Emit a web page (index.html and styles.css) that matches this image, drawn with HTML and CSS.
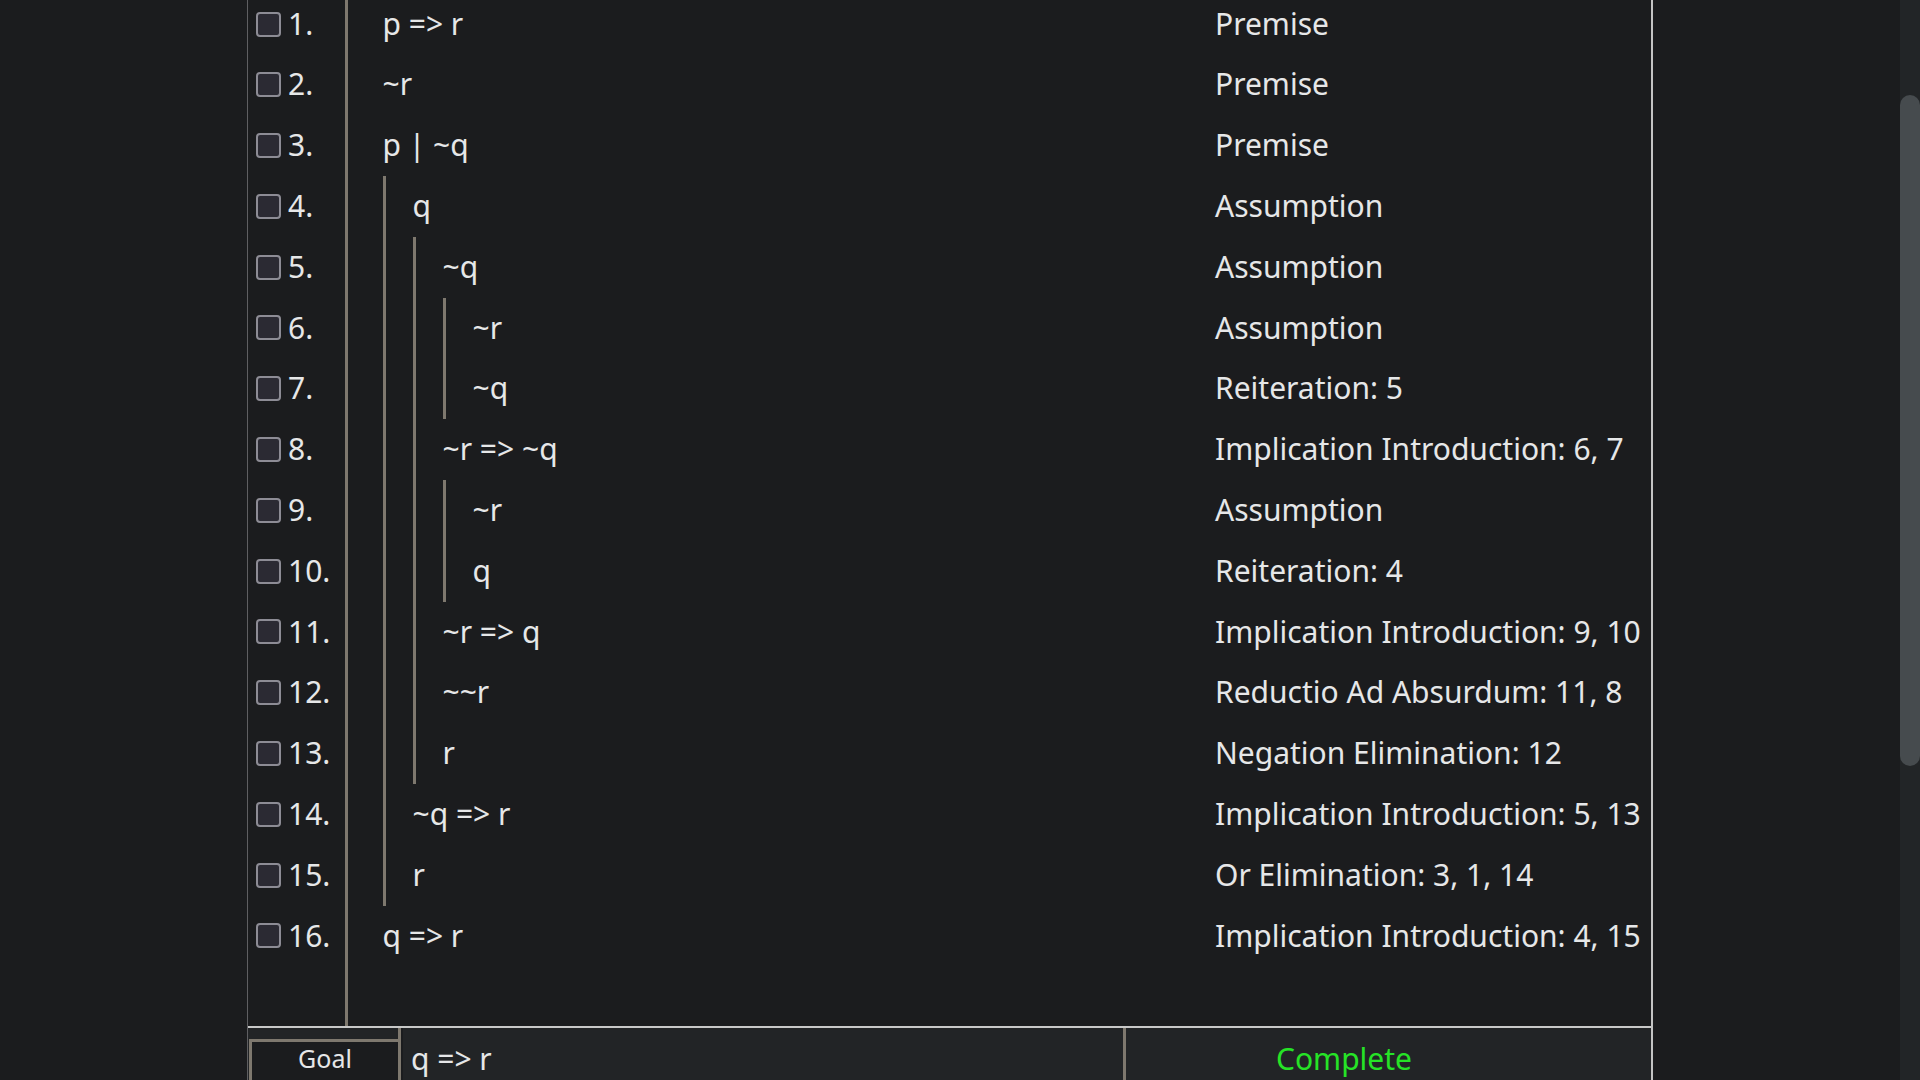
FILE: index.html
```html
<!DOCTYPE html>
<html>
<head>
<meta charset="utf-8">
<link rel="stylesheet" href="styles.css">
</head>
<body>
<div class="app">
  <div class="panel">
    <div class="proof-area">
      <div class="col-num">
        <div class="list">
          <div class="row"><span class="cb"></span><span class="n">1.</span></div>
          <div class="row"><span class="cb"></span><span class="n">2.</span></div>
          <div class="row"><span class="cb"></span><span class="n">3.</span></div>
          <div class="row"><span class="cb"></span><span class="n">4.</span></div>
          <div class="row"><span class="cb"></span><span class="n">5.</span></div>
          <div class="row"><span class="cb"></span><span class="n">6.</span></div>
          <div class="row"><span class="cb"></span><span class="n">7.</span></div>
          <div class="row"><span class="cb"></span><span class="n">8.</span></div>
          <div class="row"><span class="cb"></span><span class="n">9.</span></div>
          <div class="row"><span class="cb"></span><span class="n">10.</span></div>
          <div class="row"><span class="cb"></span><span class="n">11.</span></div>
          <div class="row"><span class="cb"></span><span class="n">12.</span></div>
          <div class="row"><span class="cb"></span><span class="n">13.</span></div>
          <div class="row"><span class="cb"></span><span class="n">14.</span></div>
          <div class="row"><span class="cb"></span><span class="n">15.</span></div>
          <div class="row"><span class="cb"></span><span class="n">16.</span></div>
        </div>
      </div>
      <div class="col-formula">
        <div class="list">
          <div class="row">p =&gt; r</div>
          <div class="row">~r</div>
          <div class="row">p | ~q</div>
          <div class="sub">
            <div class="row">q</div>
            <div class="sub">
              <div class="row">~q</div>
              <div class="sub">
                <div class="row">~r</div>
                <div class="row">~q</div>
              </div>
              <div class="row">~r =&gt; ~q</div>
              <div class="sub">
                <div class="row">~r</div>
                <div class="row">q</div>
              </div>
              <div class="row">~r =&gt; q</div>
              <div class="row">~~r</div>
              <div class="row">r</div>
            </div>
            <div class="row">~q =&gt; r</div>
            <div class="row">r</div>
          </div>
          <div class="row">q =&gt; r</div>
        </div>
      </div>
      <div class="col-reason">
        <div class="list">
          <div class="row">Premise</div>
          <div class="row">Premise</div>
          <div class="row">Premise</div>
          <div class="row">Assumption</div>
          <div class="row">Assumption</div>
          <div class="row">Assumption</div>
          <div class="row">Reiteration: 5</div>
          <div class="row">Implication Introduction: 6, 7</div>
          <div class="row">Assumption</div>
          <div class="row">Reiteration: 4</div>
          <div class="row">Implication Introduction: 9, 10</div>
          <div class="row">Reductio Ad Absurdum: 11, 8</div>
          <div class="row">Negation Elimination: 12</div>
          <div class="row">Implication Introduction: 5, 13</div>
          <div class="row">Or Elimination: 3, 1, 14</div>
          <div class="row">Implication Introduction: 4, 15</div>
        </div>
      </div>
    </div>
    <div class="bottom">
      <div class="goal-cell"><div class="goal-btn">Goal</div></div>
      <div class="goal-formula">q =&gt; r</div>
      <div class="status">Complete</div>
    </div>
  </div>
  <div class="spacer"></div>
  <div class="scrollbar"><div class="thumb"></div></div>
</div>
</body>
</html>
```

FILE: styles.css
```css
html, body {
  margin: 0;
  padding: 0;
  background: #1b1c1e;
  overflow: hidden;
}

body {
  font-family: "Noto Sans", "Open Sans", sans-serif;
  font-size: 30px;
  color: #e6e7e8;
}

.app {
  display: flex;
  width: 1920px;
  height: 1080px;
  overflow: hidden;
}

.panel {
  margin-left: 247px;
  width: 1403px;
  border-left: 1px solid #5f5f62;
  border-right: 2px solid #c4c4c4;
  display: flex;
  flex-direction: column;
  flex: none;
}

.proof-area {
  display: flex;
  height: 1026px;
  overflow: hidden;
  flex: none;
}

.list {
  margin-top: -6.4px;
}

.row {
  height: 60.8px;
  line-height: 59.8px;
  padding-bottom: 1px;
  box-sizing: border-box;
  white-space: nowrap;
}

.col-num {
  width: 97px;
  flex: none;
  border-right: 3px solid #7e786e;
}

.col-num .row {
  display: flex;
  align-items: center;
  padding-left: 8px;
  padding-bottom: 0;
}

.col-num .n {
  margin-left: 7px;
  line-height: 59.8px;
  padding-bottom: 1px;
}

.cb {
  width: 25px;
  height: 25px;
  box-sizing: border-box;
  border: 2.5px solid #8d8c95;
  border-radius: 4px;
  background: #2b2a33;
  flex: none;
}

.col-formula {
  flex: 1;
  padding-left: 34.5px;
}

.sub {
  border-left: 3px solid #7e786e;
  padding-left: 27px;
}

.col-reason {
  width: 436px;
  flex: none;
}

.bottom {
  flex: 1;
  display: flex;
  border-top: 2px solid #c8c8c8;
  background: #222426;
}

.goal-cell {
  width: 149px;
  padding-top: 11px;
  padding-left: 1px;
  border-right: 3px solid #7e786e;
  flex: none;
}

.goal-btn {
  height: 60px;
  box-sizing: border-box;
  border: 3px solid #7e786e;
  border-right: none;
  padding-top: 1px;
  background: #1b1c1e;
  text-align: center;
  font-size: 25px;
  line-height: 30px;
  color: #e6e7e8;
}

.goal-formula {
  width: 712px;
  flex: none;
  border-left: 2px solid #1b1c1e;
  padding-left: 8px;
  padding-top: 10px;
}

.status {
  flex: 1;
  border-left: 3px solid #7e786e;
  padding-left: 150px;
  padding-top: 10px;
  color: #26e326;
}

.spacer {
  flex: 1;
}

.scrollbar {
  width: 20px;
  flex: none;
  background: #222527;
}

.thumb {
  margin-top: 95px;
  height: 671px;
  border-radius: 10px;
  background: #464b4e;
}
```
